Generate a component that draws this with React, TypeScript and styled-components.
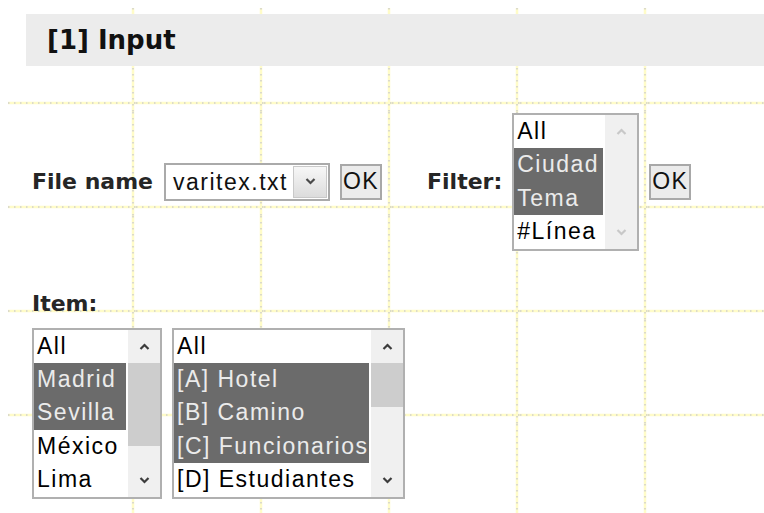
import React from 'react';
import styled, { createGlobalStyle } from 'styled-components';

// dotted guide grid, one 128x104 cell per tile
const gridTile = `<svg xmlns='http://www.w3.org/2000/svg' width='128' height='104'>
<path d='M125 0V104M0 95H128' stroke='#fffcc8' stroke-width='2.5'/>
<path d='M125 0V104M0 95H128' stroke='#cfcfcb' stroke-width='1.5' stroke-dasharray='1.5 4.5'/>
</svg>`;

const GlobalStyle = createGlobalStyle`
  html, body {
    margin: 0;
    background: #fff;
  }
`;

const Page = styled.div`
  margin: 8px 0 0 8px;
  padding-top: 6px;
  min-height: calc(100vh - 14px);
  display: flow-root;
  background-image: url("data:image/svg+xml,${encodeURIComponent(gridTile)}");
  background-repeat: repeat;
`;

const SectionTitle = styled.h2`
  margin: 0 0 0 18px;
  height: 52px;
  padding-left: 21px;
  background: #ececec;
  font-family: 'DejaVu Sans', Verdana, sans-serif;
  font-size: 26px;
  font-weight: 700;
  line-height: 52px;
  color: #111;
`;

const Form = styled.div`
  padding-left: 24px;
`;

const Row = styled.div<{ $top?: number }>`
  display: flex;
  align-items: center;
  margin-top: ${p => p.$top ?? 0}px;
`;

const Label = styled.span<{ $left?: number; $right?: number }>`
  margin-left: ${p => p.$left ?? 0}px;
  margin-right: ${p => p.$right ?? 0}px;
  font-family: 'DejaVu Sans', Verdana, sans-serif;
  font-size: 22px;
  font-weight: 700;
  color: #262626;
  white-space: nowrap;
`;

const BlockLabel = styled(Label)`
  display: block;
  line-height: 26px;
  margin: 40px 0 11px;
`;

const controlFont = `
  font-family: 'Liberation Sans', Arial, sans-serif;
  font-size: 23px;
  letter-spacing: 1.5px;
`;

const Select = styled.div<{ $right?: number }>`
  display: flex;
  box-sizing: border-box;
  width: 166px;
  height: 38px;
  margin-right: ${p => p.$right ?? 0}px;
  border: 2px solid #aaaaaa;
  background: #fff;
`;

const SelectValue = styled.div`
  flex: 1;
  padding-left: 7px;
  line-height: 34px;
  color: #111;
  ${controlFont}
`;

const SelectButton = styled.div`
  width: 32px;
  margin: 1px;
  display: flex;
  align-items: center;
  justify-content: center;
  border: 1px solid #c9c9c9;
  background: linear-gradient(#f7f7f7, #dcdcdc);
`;

const Button = styled.button<{ $right?: number }>`
  box-sizing: border-box;
  width: 42px;
  height: 36px;
  margin-right: ${p => p.$right ?? 0}px;
  padding: 0;
  border: 2px solid #a8a8a8;
  background: #ebebeb;
  color: #111;
  ${controlFont}
`;

const Box = styled.div<{ $width: number; $right?: number }>`
  display: flex;
  box-sizing: border-box;
  width: ${p => p.$width}px;
  margin-right: ${p => p.$right ?? 0}px;
  border: 2px solid #b0b0b0;
  background: #fff;
`;

const Options = styled.ul`
  flex: 1;
  margin: 0;
  padding: 0 2px 0 0;
  list-style: none;
  overflow: hidden;
`;

const Option = styled.li<{ $selected: boolean }>`
  height: 33.4px;
  line-height: 33.4px;
  padding-left: 3px;
  white-space: nowrap;
  background: ${p => (p.$selected ? '#6b6b6b' : 'transparent')};
  color: ${p => (p.$selected ? '#ebebeb' : '#000')};
  ${controlFont}
`;

const ScrollTrack = styled.div`
  width: 32px;
  display: flex;
  flex-direction: column;
  background: #f0f0f0;
`;

const ArrowCell = styled.div`
  height: 33px;
  display: flex;
  align-items: center;
  justify-content: center;
`;

const TrackMiddle = styled.div`
  flex: 1;
`;

const Thumb = styled.div`
  background: #cdcdcd;
`;

const Chevron: React.FC<{ up?: boolean; color: string }> = ({ up, color }) => (
  <svg width="11" height="7" viewBox="0 0 11 7">
    <polyline
      points={up ? '1.5,6 5.5,2 9.5,6' : '1.5,1 5.5,5 9.5,1'}
      fill="none"
      stroke={color}
      strokeWidth="2.2"
    />
  </svg>
);

interface ListBoxProps {
  width: number;
  items: string[];
  selected: string[];
  thumb?: number;
  right?: number;
}

const ListBox: React.FC<ListBoxProps> = ({ width, items, selected, thumb, right }) => {
  const arrowColor = thumb ? '#3c3c3c' : '#c8c8c8';
  return (
    <Box $width={width} $right={right}>
      <Options>
        {items.map(item => (
          <Option key={item} $selected={selected.includes(item)}>
            {item}
          </Option>
        ))}
      </Options>
      <ScrollTrack>
        <ArrowCell>
          <Chevron up color={arrowColor} />
        </ArrowCell>
        <TrackMiddle>{thumb ? <Thumb style={{ height: thumb }} /> : null}</TrackMiddle>
        <ArrowCell>
          <Chevron color={arrowColor} />
        </ArrowCell>
      </ScrollTrack>
    </Box>
  );
};

const App: React.FC = () => {
  return (
    <>
      <GlobalStyle />
      <Page>
        <SectionTitle>[1] Input</SectionTitle>
        <Form>
          <Row $top={47}>
            <Label $right={11}>File name</Label>
            <Select $right={10}>
              <SelectValue>varitex.txt</SelectValue>
              <SelectButton>
                <Chevron color="#4a4a4a" />
              </SelectButton>
            </Select>
            <Button $right={45}>OK</Button>
            <Label $right={10}>Filter:</Label>
            <ListBox
              width={127}
              right={10}
              items={['All', 'Ciudad', 'Tema', '#Línea']}
              selected={['Ciudad', 'Tema']}
            />
            <Button>OK</Button>
          </Row>
          <BlockLabel>Item:</BlockLabel>
          <Row>
            <ListBox
              width={130}
              right={10}
              items={['All', 'Madrid', 'Sevilla', 'México', 'Lima']}
              selected={['Madrid', 'Sevilla']}
              thumb={83}
            />
            <ListBox
              width={233}
              items={['All', '[A] Hotel', '[B] Camino', '[C] Funcionarios', '[D] Estudiantes']}
              selected={['[A] Hotel', '[B] Camino', '[C] Funcionarios']}
              thumb={44}
            />
          </Row>
        </Form>
      </Page>
    </>
  );
};

export default App;
